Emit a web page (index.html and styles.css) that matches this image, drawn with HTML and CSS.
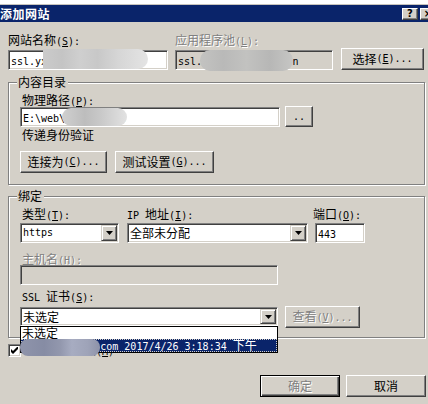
FILE: index.html
```html
<!DOCTYPE html>
<html lang="zh-CN">
<head>
<meta charset="utf-8">
<title>添加网站</title>
<link rel="stylesheet" href="styles.css">
</head>
<body>
<div class="strip"></div>
<div class="titlebar">
  <span class="title">添加网站</span>
  <div class="capbtns">
    <span class="capbtn">?</span>
    <span class="capbtn">×</span>
  </div>
</div>
<div class="client">
  <div class="toprow">
    <div class="field c1">
      <div class="lbl">网站名称<span class="m">(<u>S</u>):</span></div>
      <div class="edit"><span class="m">ssl.yxxxxxxxxxxxxxxx</span><span class="blur blur-site"></span></div>
    </div>
    <div class="field c2">
      <div class="lbl dis">应用程序池<span class="m">(<u>L</u>):</span></div>
      <div class="edit ro"><span class="m">ssl.yyyyyyyyyyyyy.cn</span><span class="blur blur-pool"></span></div>
    </div>
    <div class="btn b-select">选择<span class="m">(<u>E</u>)...</span></div>
  </div>

  <div class="group g1">
    <div class="legend">内容目录</div>
    <div class="lbl ind lbl-path">物理路径<span class="m">(<u>P</u>):</span></div>
    <div class="pathrow">
      <div class="edit path"><span class="m">E:\web\ssl.yxxxxx</span><span class="blur blur-path"></span></div>
      <div class="btn b-browse"><span class="m">..</span></div>
    </div>
    <div class="lbl ind pass">传递身份验证</div>
    <div class="btnrow">
      <div class="btn b-conn">连接为<span class="m">(<u>C</u>)...</span></div>
      <div class="btn b-test">测试设置<span class="m">(<u>G</u>)...</span></div>
    </div>
  </div>

  <div class="group g2">
    <div class="legend">绑定</div>
    <div class="bindrow">
      <div class="field f-type">
        <div class="lbl ind">类型<span class="m">(<u>T</u>):</span></div>
        <div class="combo"><span class="val m">https</span><span class="ddbtn"><svg width="7" height="4" viewBox="0 0 7 4"><polygon points="0,0 7,0 3.5,4" fill="#000"/></svg></span></div>
      </div>
      <div class="field f-ip">
        <div class="lbl"><span class="m">IP </span>地址<span class="m">(<u>I</u>):</span></div>
        <div class="combo"><span class="val">全部未分配</span><span class="ddbtn"><svg width="7" height="4" viewBox="0 0 7 4"><polygon points="0,0 7,0 3.5,4" fill="#000"/></svg></span></div>
      </div>
      <div class="field f-port">
        <div class="lbl">端口<span class="m">(<u>O</u>):</span></div>
        <div class="edit port"><span class="m">443</span></div>
      </div>
    </div>
    <div class="lbl ind dis lbl-host">主机名<span class="m">(<u>H</u>):</span></div>
    <div class="edit ro host"></div>
    <div class="lbl ind lbl-ssl"><span class="m">SSL </span>证书<span class="m">(<u>S</u>):</span></div>
    <div class="certrow">
      <div class="certwrap">
        <div class="combo cert"><span class="val">未选定</span><span class="ddbtn"><svg width="7" height="4" viewBox="0 0 7 4"><polygon points="0,0 7,0 3.5,4" fill="#000"/></svg></span></div>
        <div class="list">
          <div class="item">未选定</div>
          <div class="item sel"><span class="m">ssl.yxxxxxxx.com 2017/4/26 3:18:34 </span>下午</div>
          <span class="blur blur-cert"></span>
        </div>
      </div>
      <div class="btn b-view"><span class="dtext">查看<span class="m">(<u>V</u>)...</span></span></div>
    </div>
  </div>

  <div class="chkrow">
    <span class="chk"><svg width="7" height="7" viewBox="0 0 7 7"><polygon points="0,2 2,4 7,-1 7,2 2,7 0,5" fill="#000"/></svg></span>
    <span class="chklbl">立即启动网站<span class="m">(<u>M</u>)</span></span>
  </div>

  <div class="btnbar">
    <div class="btn default b-ok"><span class="dtext">确定</span></div>
    <div class="btn b-cancel">取消</div>
  </div>
</div>
</body>
</html>
```
FILE: styles.css
```css
* { box-sizing: border-box; margin: 0; padding: 0; }
html, body { width: 428px; height: 404px; overflow: hidden; }
body {
  background: #d4d0c8;
  color: #000;
  font-family: "Noto Sans CJK SC", "Noto Sans", sans-serif;
  font-size: 12px;
  line-height: 12px;
}
u { text-decoration: underline; text-underline-offset: 1px; }
.m { font-family: "DejaVu Sans Mono", "Liberation Mono", monospace; font-size: 10px; }

.strip { height: 5px; background: #fff; border-bottom: 1px solid #c8c4bc; }
.titlebar {
  height: 17px;
  background: #0a246a;
  display: flex;
  justify-content: space-between;
  overflow: hidden;
}
.title { color: #fff; font-weight: 700; line-height: 17px; letter-spacing: 0.5px; }
.capbtns { display: flex; gap: 2px; margin: 3px -8px 0 0; }
.capbtn {
  width: 16px; height: 12px;
  background: #d4d0c8;
  border: 1px solid; border-color: #fff #404040 #404040 #fff;
  box-shadow: inset -1px -1px 0 #808080;
  font: bold 10px/10px "DejaVu Sans", sans-serif;
  text-align: center;
  color: #000;
}

.client { padding: 12px 3px 0 8px; }

.toprow { display: flex; align-items: flex-end; }
.field { display: flex; flex-direction: column; }
.c1 { width: 160px; }
.c2 { width: 158px; margin-left: 7px; }
.b-select { width: 83px; margin-left: 8px; }
.lbl { height: 12px; white-space: nowrap; }
.toprow .lbl { margin-bottom: 4px; }
.dis { color: #808080; text-shadow: 1px 1px 0 #fff; }
.dtext { color: #808080; text-shadow: 1px 1px 0 #fff; }

.edit {
  position: relative;
  height: 20px;
  background: #fff;
  border: 1px solid; border-color: #808080 #fff #fff #808080;
  box-shadow: inset 1px 1px 0 #404040, inset -1px -1px 0 #d4d0c8;
  padding-left: 2px;
  line-height: 18px;
  white-space: nowrap;
}
.edit.ro { background: #d4d0c8; }

.btn {
  height: 22px;
  background: #d4d0c8;
  border: 1px solid; border-color: #fff #404040 #404040 #fff;
  box-shadow: inset -1px -1px 0 #808080;
  display: flex; align-items: center; justify-content: center;
  white-space: nowrap;
}
.btn.default {
  border-color: #000;
  box-shadow: inset 1px 1px 0 #fff, inset -1px -1px 0 #404040, inset -2px -2px 0 #808080;
}

.blur { position: absolute; }
.blur-site {
  left: 34px; top: -2px; width: 105px; height: 20px; border-radius: 0 10px 10px 0;
  background: linear-gradient(90deg, #cbcbcb 0%, #c4c4c4 18%, #cfcfcf 35%, #c8c8c8 52%, #d6d6d6 72%, #e4e4e4 100%);
}
.blur-pool {
  left: 24px; top: -1px; width: 93px; height: 21px; border-radius: 10px;
  background: linear-gradient(90deg, #c3c3c1 0%, #b9b9b8 25%, #c2c2c0 50%, #b7b7b6 75%, #c6c6c4 100%);
}
.blur-path {
  left: 41px; top: 0; width: 65px; height: 18px; border-radius: 9px;
  background: linear-gradient(90deg, #d0d0d0 0%, #bdbdbd 35%, #c9c9c9 60%, #e2e2e2 100%);
}
.blur-cert {
  left: -1px; top: 12px; width: 80px; height: 17px; border-radius: 8px;
  background: linear-gradient(90deg, #8f94ab 0%, #868ca4 30%, #9297ad 50%, #a7acc1 65%, #9ea3b8 85%, #8d92a9 100%);
}

.group {
  border: 1px solid #808080;
  box-shadow: 1px 1px 0 #fff, inset 1px 1px 0 #fff;
  padding: 0 0 11px 11px;
}
.g1 { margin-top: 12px; }
.g2 { margin-top: 11px; padding-bottom: 9px; }
.legend {
  width: max-content; height: 12px;
  margin: -7px 0 0 -3px;
  padding: 0 2px 0 1px;
  background: #d4d0c8;
}
.ind { margin-left: 2px; }
.lbl-path { margin-top: 6px; }
.pathrow { display: flex; align-items: flex-end; }
.path { width: 260px; }
.b-browse { width: 28px; height: 21px; margin-left: 5px; }
.pass { margin-top: 2px; }
.btnrow { display: flex; gap: 8px; margin-top: 10px; }
.b-conn { width: 87px; }
.b-test { width: 99px; }

.bindrow { display: flex; margin-top: 6px; }
.bindrow .lbl { margin-bottom: 3px; }
.f-type { width: 99px; }
.f-ip { width: 181px; margin-left: 8px; }
.f-port { margin-left: 5px; }
.combo {
  display: flex;
  height: 20px;
  background: #fff;
  border: 1px solid; border-color: #808080 #fff #fff #808080;
  box-shadow: inset 1px 1px 0 #404040, inset -1px -1px 0 #d4d0c8;
  padding: 1px;
}
.combo .val { flex: 1; padding-left: 1px; line-height: 16px; white-space: nowrap; overflow: hidden; }
.ddbtn {
  width: 16px; height: 16px;
  background: #d4d0c8;
  border: 1px solid; border-color: #d4d0c8 #404040 #404040 #d4d0c8;
  box-shadow: inset 1px 1px 0 #fff, inset -1px -1px 0 #808080;
  display: flex; align-items: center; justify-content: center;
}
.ddbtn svg { display: block; }
.port { width: 50px; margin-left: 2px; }
.lbl-host { margin-top: 10px; }
.host { width: 258px; }
.lbl-ssl { margin-top: 5px; }
.certrow { display: flex; align-items: flex-start; margin-top: 4px; }
.certwrap { position: relative; width: 258px; margin-top: 1px; }
.cert { height: 19px; }
.cert .val { line-height: 15px; }
.cert .ddbtn { height: 15px; }
.b-view { width: 75px; margin-left: 7px; }
.list {
  position: absolute; left: 0; top: 19px; z-index: 2;
  width: 258px;
  border: 1px solid #000;
  background: #fff;
}
.item { height: 12px; padding-left: 1px; line-height: 12px; white-space: nowrap; overflow: hidden; }
.item.sel {
  height: 13px; line-height: 12px;
  background: #0a246a; color: #fff;
  outline: 1px dotted #d4d0c8; outline-offset: -1px;
}

.chkrow { display: flex; align-items: center; height: 13px; margin-top: 6px; }
.chk {
  width: 13px; height: 13px;
  background: #fff;
  border: 1px solid; border-color: #808080 #fff #fff #808080;
  box-shadow: inset 1px 1px 0 #404040, inset -1px -1px 0 #d4d0c8;
  display: flex; align-items: center; justify-content: center;
}
.chk svg { display: block; }
.chklbl { margin-left: 3px; white-space: nowrap; }

.btnbar { display: flex; justify-content: flex-end; gap: 6px; margin: 18px -1px 0 0; }
.b-ok, .b-cancel { width: 80px; }
```
